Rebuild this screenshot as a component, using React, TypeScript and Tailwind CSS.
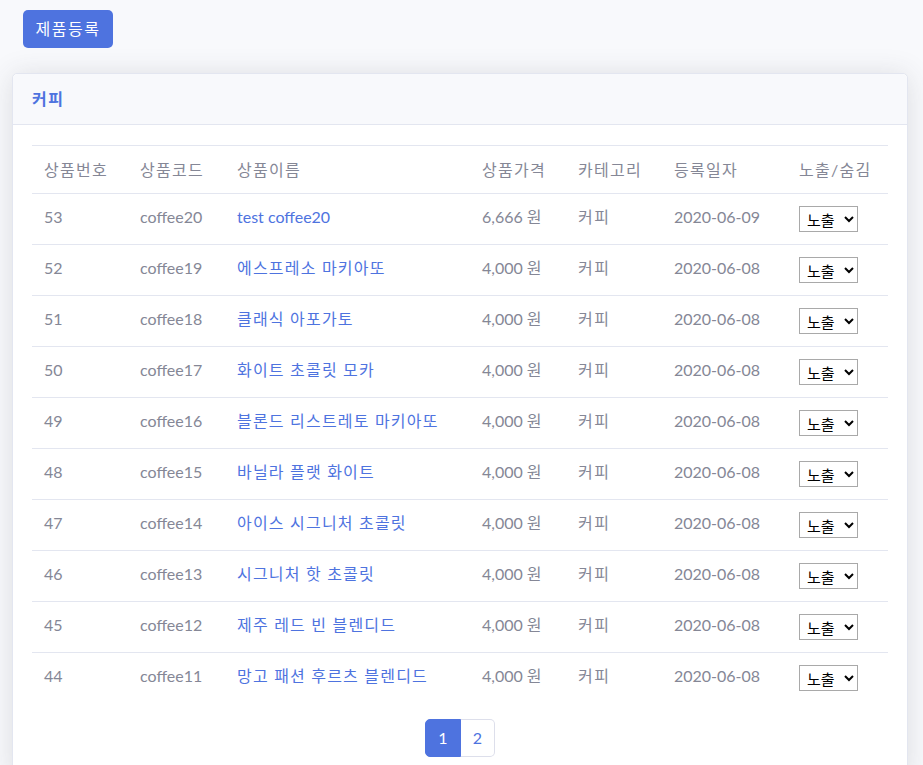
import React from "react"

const rows = [
  { no: 53, code: "coffee20", name: "test coffee20", price: "6,666 원", date: "2020-06-09" },
  { no: 52, code: "coffee19", name: "에스프레소 마키아또", price: "4,000 원", date: "2020-06-08" },
  { no: 51, code: "coffee18", name: "클래식 아포가토", price: "4,000 원", date: "2020-06-08" },
  { no: 50, code: "coffee17", name: "화이트 초콜릿 모카", price: "4,000 원", date: "2020-06-08" },
  { no: 49, code: "coffee16", name: "블론드 리스트레토 마키아또", price: "4,000 원", date: "2020-06-08" },
  { no: 48, code: "coffee15", name: "바닐라 플랫 화이트", price: "4,000 원", date: "2020-06-08" },
  { no: 47, code: "coffee14", name: "아이스 시그니처 초콜릿", price: "4,000 원", date: "2020-06-08" },
  { no: 46, code: "coffee13", name: "시그니처 핫 초콜릿", price: "4,000 원", date: "2020-06-08" },
  { no: 45, code: "coffee12", name: "제주 레드 빈 블렌디드", price: "4,000 원", date: "2020-06-08" },
  { no: 44, code: "coffee11", name: "망고 패션 후르츠 블렌디드", price: "4,000 원", date: "2020-06-08" },
]

const headers = ["상품번호", "상품코드", "상품이름", "상품가격", "카테고리", "등록일자", "노출/숨김"]
const widths = ["w-[96px]", "w-[97px]", "w-[245px]", "w-[96px]", "w-[96px]", "w-[125px]", ""]

const hangul = (s: string) => /[가-힣]/.test(s) && !/[0-9a-z]/.test(s)

export default function App() {
  return (
    <div
      className="min-h-[765px] bg-[#f8f9fc] text-[#858796] text-base"
      style={{ fontFamily: "Lato, 'Noto Sans CJK KR', sans-serif" }}
    >
      <div className="pl-[23px] pt-[10px]">
        <button className="h-[38px] w-[90px] rounded-[5px] bg-[#4e73df] text-white text-base tracking-[1.5px]">
          제품등록
        </button>
      </div>

      <div className="ml-[12px] mr-[15px] mt-[25px] rounded-[5px] border border-[#e3e6f0] bg-white shadow-[0_0.15rem_1.75rem_0_rgba(58,59,69,0.15)]">
        <div className="h-[51px] flex items-center px-[19px] bg-[#f8f9fc] border-b border-[#e3e6f0] rounded-t-[5px]">
          <h6 className="font-bold text-[#4e73df] text-base tracking-[1.5px]">커피</h6>
        </div>

        <div className="px-[19px] pt-[20px] pb-[20px]">
          <table className="w-full border-collapse">
            <thead>
              <tr className="border-t border-b border-[#e3e6f0]">
                {headers.map((h, i) => (
                  <th
                    key={h}
                    className={`px-[12px] pt-[12px] pb-[11px] leading-6 text-left font-normal tracking-[1.3px] ${widths[i]}`}
                  >
                    {h}
                  </th>
                ))}
              </tr>
            </thead>
            <tbody>
              {rows.map((r) => (
                <tr key={r.no} className="border-b border-[#e3e6f0] last:border-b-0">
                  <td className="px-[12px] pt-[11px] pb-[13px] leading-6 align-top">{r.no}</td>
                  <td className="px-[12px] pt-[11px] pb-[13px] leading-6 align-top">{r.code}</td>
                  <td
                    className={`px-[12px] pt-[11px] pb-[13px] leading-6 align-top text-[#4e73df] ${
                      hangul(r.name) ? "tracking-[1.2px]" : ""
                    }`}
                  >
                    {r.name}
                  </td>
                  <td className="px-[12px] pt-[11px] pb-[13px] leading-6 align-top">{r.price}</td>
                  <td className="px-[12px] pt-[11px] pb-[13px] leading-6 align-top tracking-[1.5px]">커피</td>
                  <td className="px-[12px] pt-[11px] pb-[13px] leading-6 align-top">{r.date}</td>
                  <td className="px-[12px] py-[12px] leading-6 align-top">
                    <select
                      defaultValue="노출"
                      className="block h-[26px] w-[59px] border border-[#a9a9a9] bg-white text-black text-[15px] pl-[3px]"
                      style={{ fontFamily: "'Noto Sans CJK KR', sans-serif" }}
                    >
                      <option>노출</option>
                      <option>숨김</option>
                    </select>
                  </td>
                </tr>
              ))}
            </tbody>
          </table>

          <div className="flex justify-center mt-[16px]">
            <div className="flex">
              <span className="h-[38px] w-[36px] flex items-center justify-center bg-[#4e73df] text-white rounded-l-[5px] border border-[#4e73df]">
                1
              </span>
              <span className="h-[38px] w-[34px] flex items-center justify-center bg-white text-[#4e73df] rounded-r-[5px] border border-l-0 border-[#dddfeb]">
                2
              </span>
            </div>
          </div>
        </div>
      </div>
    </div>
  )
}
